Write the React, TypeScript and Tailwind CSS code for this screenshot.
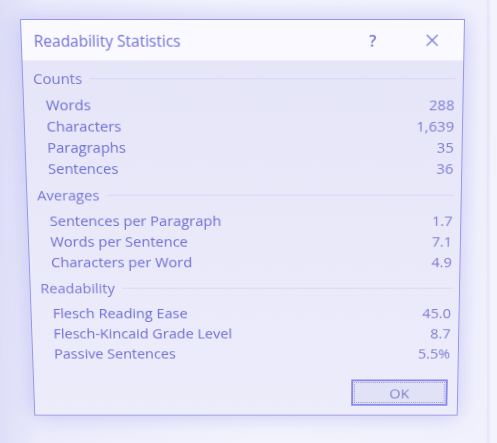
import React from "react";

type Row = { label: string; value: string };

const sections: { title: string; rows: Row[] }[] = [
  {
    title: "Counts",
    rows: [
      { label: "Words", value: "288" },
      { label: "Characters", value: "1,639" },
      { label: "Paragraphs", value: "35" },
      { label: "Sentences", value: "36" },
    ],
  },
  {
    title: "Averages",
    rows: [
      { label: "Sentences per Paragraph", value: "1.7" },
      { label: "Words per Sentence", value: "7.1" },
      { label: "Characters per Word", value: "4.9" },
    ],
  },
  {
    title: "Readability",
    rows: [
      { label: "Flesch Reading Ease", value: "45.0" },
      { label: "Flesch-Kincaid Grade Level", value: "8.7" },
      { label: "Passive Sentences", value: "5.5%" },
    ],
  },
];

export default function App() {
  return (
    <div className="w-[497px] h-[443px] overflow-hidden bg-[linear-gradient(to_right,#dedef8_0px,#ececfc_40px,#f3f3fe_260px,#f1f1fd_486px,#e4e4f8_488px,#f3f3fe_491px)] pt-[19px] pl-[20px] font-['Open_Sans',sans-serif]">
      <div className="w-[445px] h-[420px] origin-top [transform:perspective(1000px)_rotateX(-7deg)_skewX(0.5deg)] border border-[#9696ea] bg-gradient-to-b from-[#e5e5f8] to-[#ececfb] flex flex-col shadow-[0_0_22px_rgba(120,120,230,0.35)]">
        <div className="h-[41px] shrink-0 bg-[#f9f9ff] flex items-center pl-[12px]">
          <span className="text-[15.5px] leading-[20px] text-[#7070dc]">Readability Statistics</span>
          <span className="ml-auto w-[30px] text-center text-[16px] font-semibold leading-[20px] text-[#7878da] translate-x-[2px]">?</span>
          <span className="ml-[31px] mr-[17px] w-[30px] flex items-center justify-center">
            <svg width="13" height="13" viewBox="0 0 13 13" fill="none" stroke="#7e7ee0" strokeWidth="1.4">
              <path d="M1 1L12 12M12 1L1 12" />
            </svg>
          </span>
        </div>
        <div className="flex-1 flex flex-col pl-[10px] pr-[8px] pt-[7px]">
          {sections.map((s, i) => (
            <div key={s.title} className={i === 0 ? "" : "mt-[6px]"}>
              <div className="h-[22px] flex items-center">
                <span className="text-[15px] leading-[22px] text-[#7878d8]">{s.title}</span>
                <div className="flex-1 h-px bg-[#d6d6f3] ml-[8px] mr-[-1px]" />
              </div>
              <div className="mt-[5px] pl-[12px]">
                {s.rows.map((r) => (
                  <div key={r.label} className="h-[22px] flex items-center justify-between text-[15px] leading-[22px]">
                    <span className="text-[#6e6ed4]">{r.label}</span>
                    <span className="text-[#7c7cd4]">{r.value}</span>
                  </div>
                ))}
              </div>
            </div>
          ))}
          <div className="mt-[18px] flex justify-end pr-[2px]">
            <div className="w-[101px] h-[29px] border-2 border-[#8a8ae8] bg-[#e2e2f7] p-[1px]">
              <div className="w-full h-full border border-dotted border-[#9898d8] flex items-center justify-center text-[15px] leading-[20px] text-[#8080cc]">
                OK
              </div>
            </div>
          </div>
        </div>
      </div>
    </div>
  );
}
